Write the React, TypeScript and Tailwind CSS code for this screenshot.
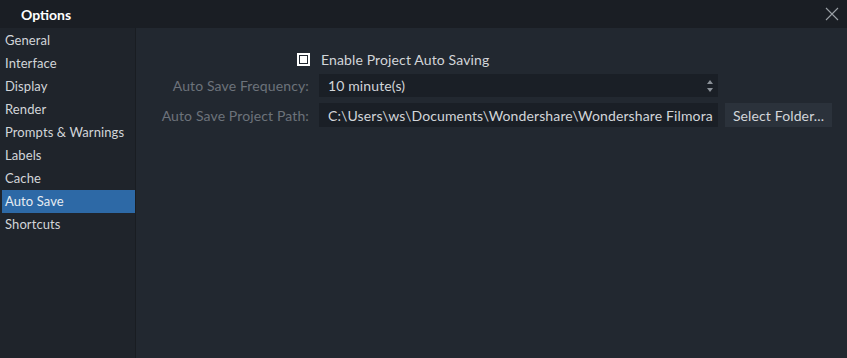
import React from 'react';

const items = ['General', 'Interface', 'Display', 'Render', 'Prompts & Warnings', 'Labels', 'Cache', 'Auto Save', 'Shortcuts'];

export default function App() {
  return (
    <div className="w-[847px] h-[358px] flex flex-col bg-[#222830] text-[14px] text-[#d2d5d9] font-['Lato',sans-serif] overflow-hidden">
      <div className="h-[28px] flex items-center justify-between bg-[#1a1e24] pl-[21px] pr-[8px]">
        <span className="font-bold text-white">Options</span>
        <svg width="14" height="14" viewBox="0 0 14 14" className="text-[#9aa0a6]">
          <path d="M1 1L13 13M13 1L1 13" stroke="currentColor" strokeWidth="1.1" />
        </svg>
      </div>
      <div className="flex flex-1">
        <div className="w-[136px] bg-[#1f242b] border-r border-[#191d22] pl-[2px] pt-[1px] text-[13px] tracking-[0.1px]">
          {items.map((it) => (
            <div
              key={it}
              className={`h-[23px] flex items-center pl-[3px] ${it === 'Auto Save' ? 'bg-[#2d69a6] text-[#e6ecf2]' : ''}`}
            >
              {it}
            </div>
          ))}
        </div>
        <div className="flex-1 pt-[24px] tracking-[0.13px]">
          <div className="flex items-center h-[14px] pl-[161px]">
            <div className="w-[13px] h-[13px] border-2 border-white p-[1px]">
              <div className="w-full h-full bg-white" />
            </div>
            <span className="ml-[11px]">Enable Project Auto Saving</span>
          </div>
          <div className="flex items-center mt-[8px]">
            <div className="w-[173px] text-right text-[#6d737b]">Auto Save Frequency:</div>
            <div className="ml-[10px] w-[399px] h-[23px] bg-[#1a1f26] flex items-center justify-between pl-[9px] pr-[5px]">
              <span>10 minute(s)</span>
              <div className="flex flex-col gap-[4px] text-[#8b9198]">
                <svg width="6" height="4" viewBox="0 0 6 4"><path d="M0 4L3 0L6 4Z" fill="currentColor" /></svg>
                <svg width="6" height="4" viewBox="0 0 6 4"><path d="M0 0L3 4L6 0Z" fill="currentColor" /></svg>
              </div>
            </div>
          </div>
          <div className="flex items-center mt-[6px]">
            <div className="w-[173px] text-right text-[#6d737b]">Auto Save Project Path:</div>
            <div className="ml-[10px] w-[399px] h-[24px] bg-[#1a1f26] flex items-center pl-[9px] whitespace-nowrap overflow-hidden">
              C:\Users\ws\Documents\Wondershare\Wondershare Filmora
            </div>
            <div className="ml-[7px] w-[107px] h-[24px] bg-[#2b323b] flex items-center justify-center">Select Folder...</div>
          </div>
        </div>
      </div>
    </div>
  );
}
